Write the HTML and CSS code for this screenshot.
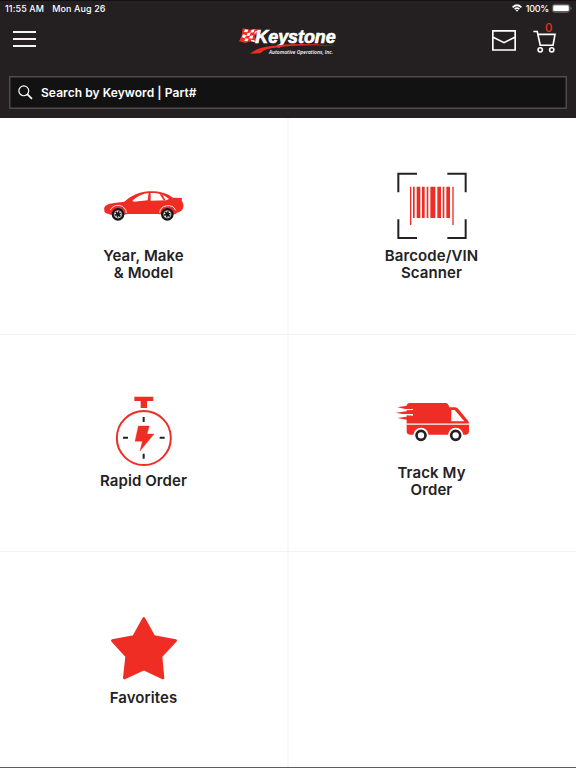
FILE: index.html
```html
<!DOCTYPE html>
<html lang="en">
<head>
<meta charset="utf-8">
<title>Keystone</title>
<link rel="stylesheet" href="styles.css">
</head>
<body>
<header class="header">
  <div class="status">
    <span class="time">11:55 AM</span><span class="date">Mon Aug 26</span>
    <svg class="wifi" viewBox="0 0 30 24"><path d="M0 8Q15-6 30 8L26.500 12Q15 1 3.500 12ZM6 14Q15 6 24 14L20.500 17.500Q15 12.500 9.500 17.500ZM11 19Q15 15.500 19 19L15 23Z" fill="#fff"/></svg>
    <span class="percent">100%</span>
    <svg class="battery" viewBox="0 0 60 27"><rect x="1" y="1" width="52" height="24" rx="7" fill="none" stroke="#858283" stroke-width="2"/><rect x="3.500" y="4" width="47" height="18" rx="4" fill="#fff"/><path d="M56 9q3 1 3 4t-3 4z" fill="#858283"/></svg>
  </div>
  <nav class="nav">
    <div class="menu"><i></i><i></i><i></i></div>
    <svg class="logo" viewBox="0 0 348 120">
      <path d="M38 25L60 29 78 26 92 34 74 48 83 69 60 64 47 69 27 64 35 47Z" fill="#ef2b24"/>
      <path d="M45 28l10 1-3 8-10-1zM64 30l10-2-3 9-10 1zM53 39l9-1-3 9-10 1zM39 43l10 3-4 8-9-2zM60 48l10-2-3 10-10-1zM46 55l10 1-4 8-9-1zM63 59l10 2 2 5-12-2zM76 34l8-1-7 7-5 1z" fill="#fff"/>
      <text class="brand" x="76" y="68" textLength="241" lengthAdjust="spacingAndGlyphs">Keystone</text>
      <path d="M60 101Q78 85 119 79Q205 66 318 78Q195 72 124 85Q103 88 91 100Z" fill="#ef2b24"/>
      <text class="tagline" x="117" y="102" textLength="192" lengthAdjust="spacingAndGlyphs">Automotive Operations, Inc.</text>
    </svg>
    <div class="actions">
      <svg class="mail" viewBox="0 0 72 63"><path d="M2.500 2.500H69.500V60H2.500ZM2 21L36 38 70 21" fill="none" stroke="#fff" stroke-width="5"/></svg>
      <div class="cart">
        <svg viewBox="0 0 70 72"><path d="M1 7H13L22 49H61L67 16H15" fill="none" stroke="#fff" stroke-width="5"/><circle cx="22" cy="63" r="6.500" fill="none" stroke="#fff" stroke-width="5"/><circle cx="57" cy="63" r="6.500" fill="none" stroke="#fff" stroke-width="5"/></svg>
        <span class="count">0</span>
      </div>
    </div>
  </nav>
  <div class="search">
    <svg viewBox="0 0 44 44"><circle cx="17" cy="17" r="14.500" fill="none" stroke="#fff" stroke-width="3.500"/><path d="M27 27L41 41" stroke="#fff" stroke-width="5"/></svg>
    <span>Search by Keyword | Part#</span>
  </div>
</header>
<main class="grid">
  <section class="tile">
    <svg class="icon" viewBox="0 -45 288 246">
      <path d="M25 91C22 76 35 72 54 69L85 65C104 49 125 36 157 34C188 33 208 37 231 53L258 54L257 61L262 73C264 85 258 96 243 98L238 103H190L186 102H93L86 104H45C32 101 24 99 25 91Z" fill="#ef2d25"/>
      <path d="M109 62C123 49 140 41 158 39L155 61L114 65ZM164 39C184 38 202 42 219 57L211 61L164 62Z" fill="#fff"/>
      <path d="M190 41L199 44 209 61H203Z" fill="#ef2d25"/>
      <path d="M43 90A25 23 0 0 1 91 99M191 99A25 23 0 0 1 239 91" fill="none" stroke="#fff" stroke-width="2.500"/>
      <g fill="#171516"><circle cx="66" cy="103" r="19"/><circle cx="214" cy="103" r="19"/></g>
      <g fill="none" stroke="#fff" stroke-width="2"><circle cx="66" cy="103" r="11"/><circle cx="214" cy="103" r="11"/></g>
      <g fill="none" stroke="#fff" stroke-width="4" stroke-dasharray="3 5.380"><circle cx="66" cy="103" r="8"/><circle cx="214" cy="103" r="8"/></g>
    </svg>
    <h2>Year, Make<br>&amp; Model</h2>
  </section>
  <section class="tile">
    <svg class="icon" viewBox="12 0 288 246">
      <path d="M111 26H55V82M202 26H257V82M55 163V219H111M257 163V219H202" fill="none" stroke="#242122" stroke-width="6"/>
      <path d="M90 65h4v115h-4zM99 65h5v94h-5zM110 65h11v94h-11zM126 65h8v94h-8zM140 65h5v94h-5zM151 65h15v94h-15zM172 65h11v94h-11zM188 65h5v94h-5zM199 65h11v94h-11zM217 65h4v115h-4z" fill="#ef2d25"/>
    </svg>
    <h2>Barcode/VIN<br>Scanner</h2>
  </section>
  <section class="tile">
    <svg class="icon" viewBox="0 -24 288 246">
      <path d="M115 20H172V33H153V54H134V33H115Z" fill="#ef2d25"/>
      <circle cx="143.500" cy="144" r="81" fill="#fff" stroke="#ef2d25" stroke-width="6"/>
      <path d="M143 81v15M143 191v15M81 143h15M191 143h15" stroke="#242122" stroke-width="6"/>
      <path d="M127 108H160L153 132H174L132 183L139 154H117Z" fill="#ef2d25" stroke="#ef2d25" stroke-width="1"/>
    </svg>
    <h2>Rapid Order</h2>
  </section>
  <section class="tile">
    <svg class="icon" viewBox="12 -24 288 246">
      <path d="M80 47Q81 39 89 39H198Q205 40 208 52H225Q231 52 235 57L264 92Q267 95 267 101V125Q267 132 259 134H90Q80 134 80 124V89L52 84L80 80V74L47 68L80 64V58L52 52Z" fill="#ef2d25"/>
      <path d="M80 102.500H267" stroke="#fff" stroke-width="4"/>
      <path d="M214 60H224L253 94H214Z" fill="#fff"/>
      <path d="M70 57H99V60L66 61ZM65 72H99V77L65 74Z" fill="#fff"/>
      <g fill="#fff"><circle cx="123" cy="136" r="23"/><circle cx="227" cy="136" r="23"/></g>
      <g fill="#fff" stroke="#242122" stroke-width="8"><circle cx="123" cy="136" r="13.500"/><circle cx="227" cy="136" r="13.500"/></g>
    </svg>
    <h2>Track My<br>Order</h2>
  </section>
  <section class="tile">
    <svg class="icon" viewBox="0 -18 288 246">
      <path d="M143.500 40L174 95L239 107L195 154L201 219L143.500 192L85 219L92 154L49 107L113 95Z" fill="#ef2d25" stroke="#ef2d25" stroke-width="8" stroke-linejoin="round"/>
    </svg>
    <h2>Favorites</h2>
  </section>
  <section class="tile"></section>
</main>
</body>
</html>
```
FILE: styles.css
```css
* { box-sizing: border-box; }
body {
  margin: 0;
  height: 768px;
  display: flex;
  flex-direction: column;
  overflow: hidden;
  background: #fff;
  color: #242122;
  font-family: Inter, "Liberation Sans", sans-serif;
}
svg { display: block; flex: none; overflow: visible; }
.header {
  height: 118px;
  flex: none;
  background: #242021;
  border-top: 1px solid #121011;
  color: #fff;
}
.status {
  height: 14px;
  display: flex;
  align-items: center;
  padding: 0 4px 0 5px;
  font-size: 9px;
  font-weight: 500;
  letter-spacing: 0.1px;
}
.date { margin-left: 8px; }
.wifi { width: 10px; height: 8px; margin-left: auto; }
.percent { margin: 0 3px 0 4px; letter-spacing: -0.25px; }
.battery { width: 20px; height: 9px; }
.nav {
  height: 61px;
  display: grid;
  grid-template-columns: 1fr 116px 1fr;
}
.menu {
  display: flex;
  flex-direction: column;
  gap: 5px;
  padding: 16px 0 0 13px;
}
.menu i { width: 23px; height: 2px; background: #f4f4f4; }
.logo { width: 116px; height: 40px; margin-top: 5px; }
.brand {
  font: italic 700 53px "Liberation Sans", sans-serif;
  fill: #fff;
  stroke: #fff;
  stroke-width: 2px;
}
.tagline { font: italic 600 16px "Open Sans", Inter, sans-serif; fill: #fff; }
.actions {
  display: flex;
  justify-content: flex-end;
  gap: 17px;
  padding: 14px 20px 0 0;
}
.mail { width: 24px; height: 21px; margin-top: 1px; }
.cart { position: relative; width: 23px; height: 24px; }
.cart svg { width: 23px; height: 24px; }
.count {
  position: absolute;
  left: 12px;
  top: -8px;
  color: #f52a22;
  font-size: 11.5px;
  font-weight: 500;
  line-height: 14px;
}
.search {
  height: 33px;
  margin: 0 9px;
  border: 1px solid #514a4c;
  box-shadow: inset 0 0 0 0.5px #514a4c;
  background: #121212;
  display: flex;
  align-items: center;
  gap: 8px;
  padding-left: 8px;
  font-size: 12px;
  font-weight: 600;
  letter-spacing: 0.06px;
}
.search span { padding-bottom: 1px; }
.search svg { width: 15px; height: 15px; }
.grid {
  flex: 1;
  display: grid;
  grid-template-columns: 288px 288px;
  grid-template-rows: 217px 217px 1fr;
  border-bottom: 1px solid #5c5c5c;
}
.tile {
  display: flex;
  flex-direction: column;
  align-items: center;
  padding-top: 47px;
  border-bottom: 1px solid #f2f2f2;
}
.tile:nth-child(odd) { box-shadow: inset -1px 0 #f9f9f9; }
.tile:nth-child(even) { box-shadow: inset 1px 0 #f9f9f9; }
.tile:nth-child(n+5) { border-bottom: 0; }
.icon { width: 96px; height: 82px; }
.tile h2 {
  margin: 0;
  height: 35px;
  padding: 0 1px 1px 0;
  display: grid;
  align-content: center;
  text-align: center;
  font-size: 15px;
  font-weight: 600;
  line-height: 17.5px;
  letter-spacing: 0.1px;
}
.tile:nth-child(3) h2, .tile:nth-child(5) h2 { padding-bottom: 2px; }
```
